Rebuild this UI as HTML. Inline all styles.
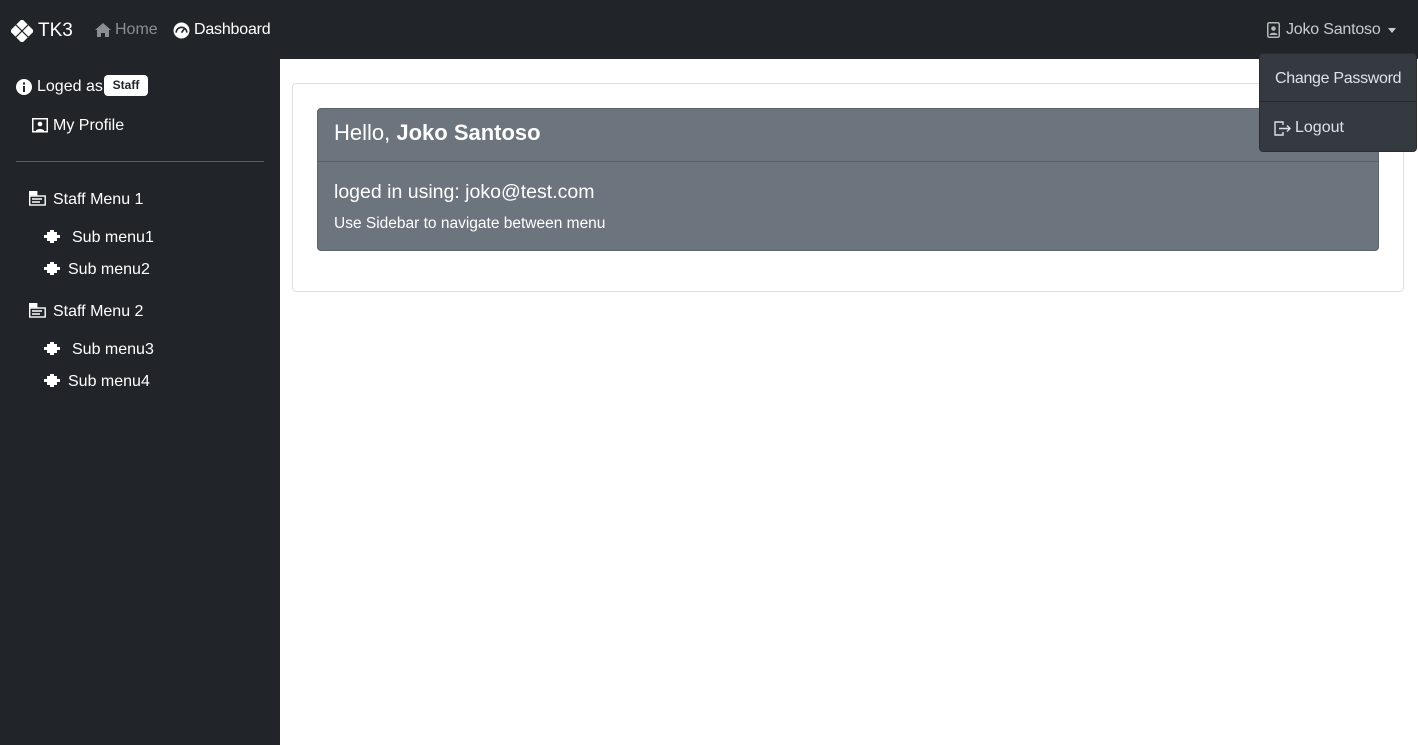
<!DOCTYPE html>
<html><head><meta charset="utf-8"><style>
*{box-sizing:border-box;margin:0;padding:0}
body{width:1418px;height:745px;overflow:hidden;background:#fff;font-family:"Liberation Sans",sans-serif;position:relative}
.nav{position:absolute;left:0;top:0;width:1418px;height:59px;background:#212529;color:#fff}
.side{position:absolute;left:0;top:59px;width:280px;height:686px;background:#212529;color:#fff}
.t{position:absolute;white-space:nowrap}
svg{position:absolute}
</style></head><body>
<div class="nav">
<svg style="left:11px;top:20px" width="22" height="22" viewBox="0 0 22 22" fill="#fff"><rect x="7" y="0.5" width="8" height="8" transform="rotate(45 11 4.5)"/><rect x="0.5" y="7" width="8" height="8" transform="rotate(45 4.5 11)"/><rect x="13.5" y="7" width="8" height="8" transform="rotate(45 17.5 11)"/><rect x="7" y="13.5" width="8" height="8" transform="rotate(45 11 17.5)"/></svg>
<div class="t" style="left:38px;top:20px;font-size:19px">TK3</div>
<svg style="left:95px;top:23px" width="16" height="14" viewBox="0 0 16 14" fill="#8c8f92"><path d="M8 0L0 7h2v7h4v-4h4v4h4V7h2z"/></svg>
<div class="t" style="left:115px;top:21px;font-size:16px;color:#8c8f92">Home</div>
<svg style="left:173px;top:22px" width="17" height="17" viewBox="0 0 16 16"><circle cx="8" cy="8" r="7.5" fill="#fff"/><path d="M3 10a5 5 0 0 1 10 0" stroke="#212529" stroke-width="1.5" fill="none"/><path d="M8 10l3-4" stroke="#212529" stroke-width="1.5"/></svg>
<div class="t" style="left:194px;top:21px;font-size:16px;letter-spacing:-0.2px">Dashboard</div>
<svg style="left:1267px;top:22px" width="13" height="16" viewBox="0 0 13 16"><rect x="0.75" y="0.75" width="11.5" height="14.5" rx="1.5" fill="none" stroke="#b5b7b9" stroke-width="1.5"/><circle cx="6.5" cy="6.5" r="2.3" fill="#b5b7b9"/><path d="M2.5 13c0-3 8-3 8 0z" fill="#b5b7b9"/></svg>
<div class="t" style="left:1286px;top:21px;font-size:16px;color:#c9cbcd;letter-spacing:-0.2px">Joko Santoso</div>
<div class="t" style="left:1388px;top:28px;width:0;height:0;border-left:4px solid transparent;border-right:4px solid transparent;border-top:5px solid #c9cbcd"></div>
</div>
<div class="side">
<svg style="left:16px;top:20px" width="16" height="16" viewBox="0 0 16 16"><circle cx="8" cy="8" r="8" fill="#fff"/><rect x="7" y="7" width="2" height="6" fill="#212529"/><circle cx="8" cy="4.5" r="1.2" fill="#212529"/></svg>
<div class="t" style="left:37px;top:19px;font-size:16px">Loged as</div>
<div class="t" style="left:104px;top:16px;width:44px;height:21px;background:#fff;border-radius:4px;color:#212529;font-size:12px;font-weight:bold;text-align:center;line-height:21px">Staff</div>
<svg style="left:32px;top:59px" width="16" height="15" viewBox="0 0 16 15"><rect x="0.75" y="0.75" width="14.5" height="13" fill="none" stroke="#fff" stroke-width="1.5"/><circle cx="8" cy="6" r="2.3" fill="#fff"/><path d="M3.5 14c0-4 9-4 9 0z" fill="#fff"/></svg>
<div class="t" style="left:53px;top:58px;font-size:16px">My Profile</div>
<div class="t" style="left:16px;top:102px;width:248px;height:1px;background:#5a5e62"></div>
<svg style="left:29px;top:132px" width="17" height="15" viewBox="0 0 17 15" fill="none" stroke="#fff" stroke-width="1.4"><rect x="0.7" y="0.7" width="7" height="3" fill="#fff"/><rect x="0.7" y="5" width="15.5" height="9"/><path d="M3 8h10M3 11h8"/></svg>
<div class="t" style="left:53px;top:132px;font-size:16px">Staff Menu 1</div>
<svg style="left:44px;top:171px" width="16" height="13" viewBox="0 0 16 13" fill="#fff"><path d="M3 2h3V0h4v2h3v3h3v3h-3v3h-3v2H6v-2H3V8H0V5h3z"/></svg>
<div class="t" style="left:72px;top:170px;font-size:16px">Sub menu1</div>
<svg style="left:44px;top:203px" width="16" height="13" viewBox="0 0 16 13" fill="#fff"><path d="M3 2h3V0h4v2h3v3h3v3h-3v3h-3v2H6v-2H3V8H0V5h3z"/></svg>
<div class="t" style="left:68px;top:202px;font-size:16px">Sub menu2</div>
<svg style="left:29px;top:244px" width="17" height="15" viewBox="0 0 17 15" fill="none" stroke="#fff" stroke-width="1.4"><rect x="0.7" y="0.7" width="7" height="3" fill="#fff"/><rect x="0.7" y="5" width="15.5" height="9"/><path d="M3 8h10M3 11h8"/></svg>
<div class="t" style="left:53px;top:244px;font-size:16px">Staff Menu 2</div>
<svg style="left:44px;top:283px" width="16" height="13" viewBox="0 0 16 13" fill="#fff"><path d="M3 2h3V0h4v2h3v3h3v3h-3v3h-3v2H6v-2H3V8H0V5h3z"/></svg>
<div class="t" style="left:72px;top:282px;font-size:16px">Sub menu3</div>
<svg style="left:44px;top:315px" width="16" height="13" viewBox="0 0 16 13" fill="#fff"><path d="M3 2h3V0h4v2h3v3h3v3h-3v3h-3v2H6v-2H3V8H0V5h3z"/></svg>
<div class="t" style="left:68px;top:314px;font-size:16px">Sub menu4</div>
</div>
<div class="t" style="left:292px;top:83px;width:1112px;height:209px;border:1px solid #dee2e6;border-radius:4px"></div>
<div class="t" style="left:317px;top:108px;width:1062px;height:143px;background:#6c757d;border:1px solid #5c636a;border-radius:4px;color:#fff">
<div class="t" style="left:16px;top:11px;font-size:22px">Hello, <b>Joko Santoso</b></div>
<div class="t" style="left:0;top:52px;width:1060px;height:1px;background:#5a6167"></div>
<div class="t" style="left:16px;top:72px;font-size:19.5px">loged in using: joko@test.com</div>
<div class="t" style="left:16px;top:106px;font-size:15.5px">Use Sidebar to navigate between menu</div>
</div>
<div class="t" style="left:1259px;top:53px;width:158px;height:99px;background:#343a40;border:1px solid #2a2e33;border-radius:4px;color:#dee2e6">
<div class="t" style="left:15px;top:16px;font-size:16px;letter-spacing:-0.3px">Change Password</div>
<div class="t" style="left:0;top:47px;width:156px;height:1px;background:#23272b"></div>
<svg style="left:14px;top:67px" width="18" height="15" viewBox="0 0 18 15" fill="none" stroke="#dee2e6" stroke-width="1.4"><path d="M9 4V1H1v13h8v-3"/><path d="M5 7.5h11M13 4.5l3 3-3 3"/></svg>
<div class="t" style="left:35px;top:65px;font-size:16px">Logout</div>
</div>
</body></html>
